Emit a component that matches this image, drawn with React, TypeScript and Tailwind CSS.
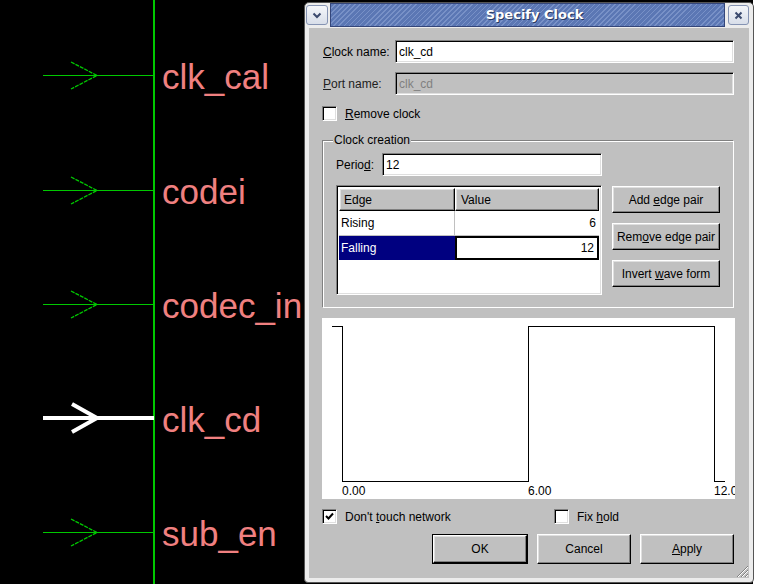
import React from "react";

const sunken =
  "bg-white border border-t-[#808080] border-l-[#808080] border-b-white border-r-white shadow-[inset_1px_1px_0_#000,inset_-1px_-1px_0_#dfdfdf]";
const raised =
  "bg-[#c0c0c0] border border-t-white border-l-white border-b-black border-r-black shadow-[inset_-1px_-1px_0_#808080,inset_1px_1px_0_#dfdfdf]";

function Schematic() {
  const rows = [
    { y: 75, label: "clk_cal" },
    { y: 190, label: "codei" },
    { y: 304, label: "codec_in" },
    { y: 418, label: "clk_cd", hi: true },
    { y: 532, label: "sub_en" },
  ];
  return (
    <svg width="758" height="584" className="absolute left-0 top-0">
      <rect x="0" y="0" width="758" height="584" fill="#000" />
      <rect x="153" y="0" width="2" height="584" fill="#00c800" />
      {rows.map((r) =>
        r.hi ? (
          <g key={r.label}>
            <rect x="43" y={r.y - 2} width="111" height="4" fill="#fff" />
            <polyline
              points={`72,${r.y - 14} 97,${r.y} 72,${r.y + 14}`}
              fill="none"
              stroke="#fff"
              strokeWidth="4"
            />
          </g>
        ) : (
          <g key={r.label}>
            <rect x="43" y={r.y} width="111" height="1" fill="#00c800" />
            <polyline
              points={`71,${r.y - 13} 97,${r.y + 0.5} 71,${r.y + 14}`}
              fill="none"
              stroke="#00c800"
              strokeWidth="1.3"
              strokeDasharray="4 1"
            />
          </g>
        )
      )}
      {rows.map((r) => (
        <text
          key={"t" + r.label}
          x="162"
          y={r.y + 14}
          fontSize="35"
          fill="#f08080"
          fontFamily="'Liberation Sans', Arial, sans-serif"
        >
          {r.label}
        </text>
      ))}
    </svg>
  );
}

function CheckBox({ checked }: { checked?: boolean }) {
  return (
    <div className={`w-[15px] h-[15px] ${sunken} flex items-center justify-center`}>
      {checked && (
        <svg width="9" height="9" viewBox="0 0 9 9">
          <path d="M1 4 L3.5 6.5 L8 1.5" fill="none" stroke="#000" strokeWidth="2" />
        </svg>
      )}
    </div>
  );
}

function Waveform() {
  return (
    <svg width="413" height="181" className="block">
      <path
        d="M10 8.5 H20.5 V163.5 H206.5 V8.5 H392.5 V163.5 H403"
        fill="none"
        stroke="#000"
        strokeWidth="1"
        shapeRendering="crispEdges"
      />
      <g fontFamily="'Liberation Sans', Arial, sans-serif" fontSize="12" fill="#000">
        <text x="20" y="177">0.00</text>
        <text x="206" y="177">6.00</text>
        <text x="392" y="177">12.00</text>
      </g>
    </svg>
  );
}

export default function App() {
  return (
    <div className="relative w-[758px] h-[584px] overflow-hidden bg-white font-['Liberation_Sans',Arial,sans-serif] text-[12px] text-black">
      <Schematic />
      <div className="absolute left-[753px] top-0 w-[5px] h-[584px] bg-white" />

      {/* Dialog window */}
      <div className="absolute left-[304px] top-[2px] w-[450px] h-[581px] rounded-t-[5px] rounded-b-[4px] border border-[#555] bg-[#ececec] flex flex-col">
        {/* title row */}
        <div className="h-[24px] flex items-center pl-[1px]">
          <div className="w-[22px] h-[20px] rounded-[3px] border border-[#8593b3] bg-[linear-gradient(#f4f6fa,#d8dee9)] flex items-center justify-center">
            <svg width="10" height="7" viewBox="0 0 10 7">
              <path d="M1.5 1.5 L5 5 L8.5 1.5" fill="none" stroke="#3b4a6e" strokeWidth="2" />
            </svg>
          </div>
          <div className="ml-[2px] w-[395px] h-[24px] -mt-[1px] border border-[#34467a] bg-[repeating-linear-gradient(135deg,#5b77b4_0px,#5b77b4_2.5px,#7891c7_2.5px,#7891c7_3.6px)] flex items-center justify-center pl-[14px]">
            <span className="font-['DejaVu_Sans',sans-serif] font-bold text-[13px] text-white [text-shadow:1px_1px_0_#27385f]">
              Specify Clock
            </span>
          </div>
          <div className="ml-[3px] w-[21px] h-[20px] rounded-[3px] border border-[#8593b3] bg-[linear-gradient(#f4f6fa,#d8dee9)] flex items-center justify-center">
            <svg width="9" height="9" viewBox="0 0 9 9">
              <path d="M1.5 1.5 L7.5 7.5 M7.5 1.5 L1.5 7.5" stroke="#3b4a6e" strokeWidth="2" />
            </svg>
          </div>
        </div>

        {/* body */}
        <div className="relative mt-[1px] mx-[4px] h-[550px] bg-[#c0c0c0] pl-[13px] pr-[15px] flex flex-col">
          {/* Clock name */}
          <div className="mt-[12px] h-[23px] flex items-center">
            <div className="w-[73px] pl-[1px]">
              <u>C</u>lock name:
            </div>
            <div className={`w-[339px] h-[23px] ${sunken} flex items-center pl-[3px]`}>clk_cd</div>
          </div>
          {/* Port name */}
          <div className="mt-[9px] h-[23px] flex items-center">
            <div className="w-[73px] pl-[1px] text-[#202020]">
              <u>P</u>ort name:
            </div>
            <div className="w-[339px] h-[23px] border border-t-[#808080] border-l-[#808080] border-b-white border-r-white shadow-[inset_1px_1px_0_#000,inset_-1px_-1px_0_#dfdfdf] bg-[#c0c0c0] text-[#808080] flex items-center pl-[3px]">
              clk_cd
            </div>
          </div>
          {/* Remove clock */}
          <div className="mt-[11px] h-[15px] flex items-center">
            <CheckBox />
            <span className="ml-[8px]">
              <u>R</u>emove clock
            </span>
          </div>

          {/* Group box */}
          <div className="relative mt-[19px] h-[168px] border border-t-[#808080] border-l-[#808080] border-b-white border-r-white shadow-[inset_1px_1px_0_#fff,1px_1px_0_#808080_inset] px-[13px] flex flex-col">
            <div className="absolute left-[10px] -top-[8px] bg-[#c0c0c0] px-[1px] leading-[14px]">
              Clock creation
            </div>
            <div className="mt-[12px] h-[23px] flex items-center">
              <div className="w-[46px]">
                Perio<u>d</u>:
              </div>
              <div className={`w-[220px] h-[23px] ${sunken} flex items-center pl-[3px]`}>12</div>
            </div>
            <div className="mt-[9px] flex">
              {/* table */}
              <div className={`w-[266px] h-[110px] ${sunken} p-[2px] flex flex-col`}>
                <div className="h-[23px] flex">
                  <div className={`w-[116px] h-[23px] ${raised} flex items-center pl-[4px]`}>Edge</div>
                  <div className={`flex-1 h-[23px] ${raised} flex items-center pl-[5px]`}>Value</div>
                </div>
                <div className="h-[25px] flex border-b border-[#c0c0c0]">
                  <div className="w-[116px] flex items-center pl-[2px] border-r border-[#c0c0c0]">Rising</div>
                  <div className="flex-1 flex items-center justify-end pr-[3px]">6</div>
                </div>
                <div className="h-[24px] flex">
                  <div className="w-[116px] flex items-center pl-[2px] bg-[#000080] text-white">Falling</div>
                  <div className="flex-1 flex items-center justify-end pr-[3px] border-2 border-black bg-white">
                    12
                  </div>
                </div>
              </div>
              {/* buttons */}
              <div className="ml-[10px] mt-[1px] flex flex-col gap-[10px]">
                <div className={`w-[108px] h-[27px] ${raised} flex items-center justify-center`}>
                  Add&nbsp;<u>e</u>dge pair
                </div>
                <div className={`w-[108px] h-[27px] ${raised} flex items-center justify-center`}>
                  Rem<u>o</u>ve edge pair
                </div>
                <div className={`w-[108px] h-[27px] ${raised} flex items-center justify-center`}>
                  Invert&nbsp;<u>w</u>ave form
                </div>
              </div>
            </div>
          </div>

          {/* Waveform */}
          <div className="mt-[10px] w-[413px] h-[181px] bg-white overflow-hidden">
            <Waveform />
          </div>

          {/* checkboxes */}
          <div className="mt-[10px] h-[15px] flex items-center">
            <div className="w-[232px] flex items-center">
              <CheckBox checked />
              <span className="ml-[8px]">
                Don't <u>t</u>ouch network
              </span>
            </div>
            <CheckBox />
            <span className="ml-[8px]">
              Fix <u>h</u>old
            </span>
          </div>

          {/* buttons */}
          <div className="mt-[10px] h-[30px] flex justify-end gap-[9px]">
            <div className="w-[96px] h-[30px] border border-black">
              <div className={`w-full h-full ${raised} flex items-center justify-center`}>OK</div>
            </div>
            <div className={`w-[94px] h-[30px] ${raised} flex items-center justify-center`}>Cancel</div>
            <div className={`w-[94px] h-[30px] ${raised} flex items-center justify-center`}>
              <u>A</u>pply
            </div>
          </div>

          {/* resize grip */}
          <svg width="14" height="14" className="absolute right-0 bottom-0">
            <path d="M13 2 L2 13 M13 6 L6 13 M13 10 L10 13" stroke="#808080" strokeWidth="1" />
            <path d="M13 3 L3 13 M13 7 L7 13 M13 11 L11 13" stroke="#fff" strokeWidth="1" />
          </svg>
        </div>
      </div>
    </div>
  );
}
